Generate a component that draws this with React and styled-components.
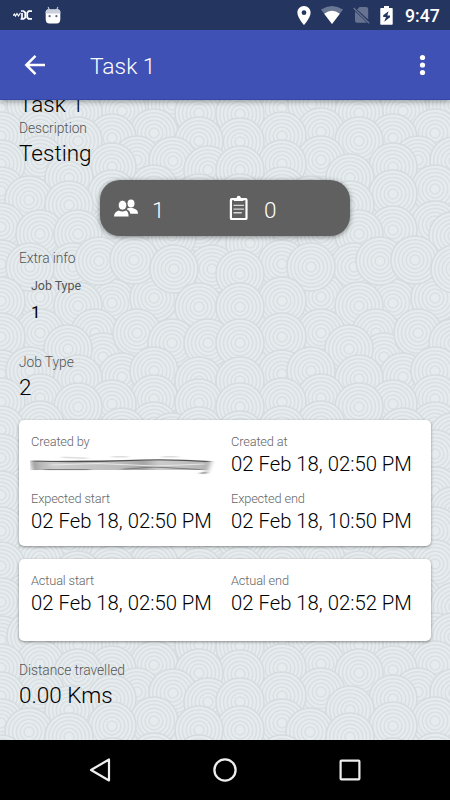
import React from "react";
import styled, { createGlobalStyle } from "styled-components";

const GlobalStyle = createGlobalStyle`
  * { box-sizing: border-box; }
  html, body { margin: 0; padding: 0; background: #000; }
  body { font-family: Roboto, "Noto Sans", sans-serif; }
`;

const Screen = styled.div`
  width: 450px;
  height: 800px;
  display: flex;
  flex-direction: column;
  overflow: hidden;
  background: #e4e9ec;
`;

const StatusBar = styled.header`
  height: 30px;
  flex: none;
  display: flex;
  align-items: center;
  padding: 0 10px 0 13px;
  background: #243660;
  color: #fff;
  z-index: 3;
`;

const StatusGroup = styled.div`
  display: flex;
  align-items: center;
  gap: ${(p) => p.$gap}px;
  margin-left: ${(p) => (p.$end ? "auto" : 0)};
`;

const Clock = styled.span`
  font-size: 17.7px;
  font-weight: 500;
  line-height: 30px;
  margin-left: 2px;
  width: 35px;
  white-space: nowrap;
  padding-top: 1px;
`;

const AppBar = styled.div`
  height: 70px;
  flex: none;
  display: flex;
  align-items: center;
  padding: 0 21px 0 24px;
  background: #3f51b5;
  border-bottom: 1px solid #3347ab;
  box-shadow: 0 2px 5px rgba(0, 0, 0, 0.32);
  z-index: 2;
`;

const Title = styled.h1`
  flex: 1;
  margin: 4px 0 0 44px;
  font-size: 22.8px;
  font-weight: 300;
  color: #fff;
`;

const Content = styled.main`
  position: relative;
  height: 640px;
  flex: none;
  overflow: hidden;
  isolation: isolate;
  padding: 0 19px;
`;

const Backdrop = styled.svg`
  position: absolute;
  inset: 0;
  z-index: -1;
`;

const Field = styled.section`
  display: flex;
  flex-direction: column;
  gap: 2px;
  margin-top: ${(p) => p.$top || 0}px;
  padding-left: ${(p) => p.$indent || 0}px;
`;

const Label = styled.div`
  font-size: 13.8px;
  font-weight: 300;
  letter-spacing: -0.06px;
  line-height: 18px;
  color: #555;
`;

const Value = styled.div`
  font-size: 22.5px;
  font-weight: 300;
  line-height: 28px;
  color: #000;
`;

const MinorLabel = styled(Label)`
  font-size: 12.5px;
  font-weight: 400;
`;

const MinorValue = styled(Value)`
  font-size: 17px;
  font-weight: 400;
  line-height: 24px;
  margin-top: 3px;
`;

const Counters = styled.div`
  width: 250px;
  height: 56px;
  margin: 13px auto 0;
  display: grid;
  grid-template-columns: 116px 1fr;
  align-items: center;
  padding-left: 13px;
  border-radius: 20px;
  background: #606060;
  box-shadow: 0 1px 5px rgba(0, 0, 0, 0.45);
`;

const Counter = styled.div`
  display: flex;
  align-items: center;
  gap: ${(p) => p.$gap}px;
  font-size: 22.5px;
  font-weight: 300;
  line-height: 28px;
  color: #fff;
`;

const Count = styled.span`
  padding-top: 3px;
`;

const Card = styled.section`
  display: grid;
  grid-template-columns: 200px 1fr;
  align-content: start;
  row-gap: 12px;
  width: 412px;
  height: ${(p) => p.$height}px;
  margin-top: ${(p) => p.$top}px;
  padding: 13px 0 0 12px;
  border-radius: 5px;
  background: #fff;
  box-shadow: 0 1px 3px rgba(0, 0, 0, 0.42);
`;

const Cell = styled.div`
  min-width: 0;
`;

const CellLabel = styled(Label)`
  font-size: 12.8px;
  letter-spacing: -0.15px;
  color: #666;
`;

const CellValue = styled(Value)`
  font-size: 20.3px;
  line-height: 27px;
  white-space: nowrap;
`;

const Smudge = styled.svg`
  display: block;
  width: 188px;
  height: 27px;
  margin-left: -1px;
`;

const NavBar = styled.nav`
  height: 60px;
  flex: none;
  display: flex;
  justify-content: space-between;
  align-items: center;
  padding: 0 88px 0 88px;
  background: #000;
  z-index: 2;
`;

const PERIOD_X = 281;
const PERIOD_Y = 532;
const RINGS = [20.3, 16.5, 12.7, 8.9, 5];

// Centres of the wave circles in one tile, listed from back to front.
const CIRCLES = [
  [282, 108], [312, 104], [435, 105], [453, 105], [480, 113], [403, 111], [359, 113], [240, 114],
  [435, 133], [321, 132], [282, 136], [393, 138], [359, 141], [240, 142], [480, 141],
  [418, 160], [454, 161], [321, 160], [282, 164], [393, 167], [489, 170], [240, 170], [350, 178],
  [435, 189], [282, 191], [393, 194], [240, 198], [480, 198], [310, 200], [350, 205],
  [435, 225], [480, 227], [282, 227], [393, 230], [321, 234], [359, 234], [453, 236], [250, 243],
  [393, 303], [435, 298], [354, 267], [282, 264], [321, 297], [311, 267], [380, 261], [415, 260],
  [493, 269], [455, 269], [240, 274],
  [282, 301], [359, 306], [480, 307], [240, 307],
  [376, 333], [384, 357], [321, 333], [282, 337], [418, 333], [453, 343], [489, 343], [240, 343], [349, 349],
  [403, 377], [435, 371], [282, 374], [311, 371], [359, 379], [480, 381], [240, 381],
  [435, 399], [321, 398], [282, 402], [393, 404], [480, 403], [359, 407], [240, 407],
  [435, 426], [321, 425], [282, 430], [403, 432], [453, 437], [480, 431], [349, 444], [240, 435],
  [435, 454], [321, 456], [282, 458], [393, 462], [480, 464], [359, 472], [240, 464],
  [435, 491], [311, 490], [282, 495], [393, 498], [453, 511], [480, 501], [359, 506], [240, 500],
  [435, 531], [321, 526], [282, 531], [403, 534], [489, 538], [350, 541], [240, 536],
  [435, 564], [321, 560], [282, 566], [393, 570], [480, 572], [359, 575], [240, 571],
  [418, 600], [311, 596], [282, 602], [454, 607], [489, 607], [350, 611], [240, 607],
];

function buildCircles() {
  const out = [];
  [-1, 0, 1].forEach((row) => {
    CIRCLES.forEach(([cx, cy]) => {
      [-2, -1, 0, 1].forEach((col) => {
        const x = cx + col * PERIOD_X;
        const y = cy - 100 + row * PERIOD_Y;
        if (x > -25 && x < 475 && y > -25 && y < 665) out.push([x, y]);
      });
    });
  });
  return out;
}

const WAVES = buildCircles();

function WaveBackdrop() {
  return (
    <Backdrop width="450" height="640" viewBox="0 0 450 640" aria-hidden="true">
      <defs>
        <g id="wave" fill="none" stroke="#d9dfe2" strokeWidth="1.5">
          <circle r="24" fill="#e6ecee" strokeWidth="1.6" stroke="#d5dbde" />
          {RINGS.map((r) => (
            <circle key={r} r={r} />
          ))}
        </g>
      </defs>
      {WAVES.map(([x, y], i) => (
        <use key={i} href="#wave" x={x} y={y} />
      ))}
    </Backdrop>
  );
}

function CarrierIcon() {
  return (
    <svg width="20" height="12" viewBox="0 0 20 12" fill="none" stroke="#fff">
      <path d="M0 6.5 L1.5 5 L2.5 7 L4 4.5 L5.5 7 L7.5 3.8" strokeWidth="1.1" />
      <path d="M8 2 H10.5 L12.2 3.5 V8.5 L10.5 10 H7.5 M9 4 V10" strokeWidth="1.7" />
      <path d="M19 2.2 H15.6 L14.2 3.8 V8.3 L15.6 9.8 H19" strokeWidth="1.8" />
    </svg>
  );
}

function RobotIcon() {
  return (
    <svg width="16" height="18" viewBox="0 0 16 18">
      <path d="M4.5 5 L3.2 1 M11.5 5 L12.8 1" stroke="#b7bfce" strokeWidth="1.2" />
      <path d="M2.5 3.5 H13.5 Q15.3 3.5 15.3 6 V13 Q15.3 17.5 11.5 17.5 H4.5 Q.7 17.5 .7 13 V6 Q.7 3.5 2.5 3.5Z" fill="#fff" />
      <path d="M2.5 3.5 H13.5 Q15.3 3.5 15.3 6 V7.5 H.7 V6 Q.7 3.5 2.5 3.5Z" fill="#c9cfdb" />
      <circle cx="4.6" cy="10.2" r="1.1" fill="#56617f" />
      <circle cx="11.4" cy="10.2" r="1.1" fill="#56617f" />
    </svg>
  );
}

function PinIcon() {
  return (
    <svg width="14" height="19" viewBox="0 0 14 19">
      <path fillRule="evenodd" fill="#fff" d="M7 0C3.1 0 .4 3 .4 6.7 .4 11.5 7 19 7 19s6.6-7.5 6.6-12.3C13.6 3 10.9 0 7 0Zm0 4.3a2.4 2.4 0 1 1 0 4.8 2.4 2.4 0 0 1 0-4.8Z" />
    </svg>
  );
}

function WifiIcon() {
  return (
    <svg width="22" height="18" viewBox="0 0 22 18">
      <path d="M0 3.6 Q11-3.6 22 3.6 L11 18Z" fill="#6b7894" />
      <path d="M3.2 7.7 Q11 1.8 18.8 7.7 L11 18Z" fill="#fff" />
    </svg>
  );
}

function NoSimIcon() {
  return (
    <svg width="17" height="18" viewBox="0 0 17 18">
      <path d="M6.6 1 H13 Q15.2 1 15.2 3 V13.4 L4.1 3.4Z M2 5.2 L14 16.8 H4 Q2 16.8 2 15Z" fill="#66728f" />
      <path d="M.6 2 L16.2 17.2" stroke="#66728f" strokeWidth="1.3" />
    </svg>
  );
}

function BatteryIcon() {
  return (
    <svg width="13" height="19" viewBox="0 0 13 19">
      <path d="M4 0H9V2H12Q12.7 2 12.7 2.8V18Q12.7 18.8 12 18.8H1Q.3 18.8 .3 18V2.8Q.3 2 1 2H4Z" fill="#fff" />
      <path d="M8.6 5.2 L3.2 9.3 V11 H6 L4.2 15.8 L10 11.3 V9.5 H7.3Z" fill="#243660" />
    </svg>
  );
}

function BackIcon() {
  return (
    <svg width="22" height="22" viewBox="0 0 22 22" fill="none" stroke="#fff" strokeWidth="2.5">
      <path d="M21 11 H3 M11.5 1.8 L2.3 11 L11.5 20.2" />
    </svg>
  );
}

function MoreIcon() {
  return (
    <svg width="13" height="22" viewBox="0 0 13 22" fill="#fff">
      <circle cx="6.5" cy="3.5" r="2.6" />
      <circle cx="6.5" cy="11" r="2.6" />
      <circle cx="6.5" cy="18.5" r="2.6" />
    </svg>
  );
}

function PeopleIcon() {
  return (
    <svg width="26" height="20" viewBox="0 0 26 20" fill="#fff">
      <ellipse cx="18" cy="5.4" rx="3.5" ry="4" />
      <path d="M14.5 10.2 Q18 8.8 22 11 Q25 12 25 15.7 H17.4 Q17 12.6 13.9 11.3Z" />
      <ellipse cx="9.5" cy="7.2" rx="4.2" ry="4.9" stroke="#606060" strokeWidth=".8" />
      <path d="M1 18.6 Q1 13.9 5.8 12.5 Q9.3 14.5 13 12.5 Q15.6 13.4 15.6 18.6Z" />
    </svg>
  );
}

function ClipboardIcon() {
  return (
    <svg width="20" height="26" viewBox="0 0 20 26">
      <rect x="1.9" y="4.2" width="15.6" height="19.8" rx=".8" fill="none" stroke="#fff" strokeWidth="2.2" />
      <path d="M5 3 H7.5 Q8 .8 9.7 .8 Q11.4 .8 12 3 H14.4 V6 H5Z" fill="#fff" />
      <path d="M4.5 10.4H15 M4.5 14.1H15 M4.5 17.8H12.8" stroke="#d9d9d9" strokeWidth="1.4" />
    </svg>
  );
}

function RedactedName() {
  return (
    <Smudge viewBox="0 0 188 27" aria-hidden="true">
      <defs>
        <filter id="smear" x="-5%" y="-20%" width="110%" height="140%">
          <feGaussianBlur stdDeviation="2.4 0.7" />
        </filter>
        <linearGradient id="ink" x1="0" x2="1">
          <stop offset="0" stopColor="#aaa" />
          <stop offset=".12" stopColor="#ccc" />
          <stop offset=".5" stopColor="#bbb" />
          <stop offset=".63" stopColor="#a4a4a4" />
          <stop offset=".72" stopColor="#ccc" />
          <stop offset="1" stopColor="#b4b4b4" />
        </linearGradient>
      </defs>
      <g filter="url(#smear)" fill="none">
        <path d="M2 10 L50 9 L179 10 L176 19 L3 19Z" fill="url(#ink)" />
        <path d="M2 10 Q50 11.4 95 9.6 T180 10.6" stroke="#505050" strokeWidth="1.2" />
        <path d="M2.5 10 L4.5 19" stroke="#555" strokeWidth="2" />
        <path d="M14 18.6H60 M92 18.3L124 16L172 18.6" stroke="#777" strokeWidth="1" />
        <path d="M20 14L68 12.5L126 15L174 13" stroke="#e6e6e6" strokeWidth="1.2" />
        <path d="M180 10L176 21.5L171 22.5" stroke="#777" strokeWidth="1.6" />
        <path d="M32 6.2L57 7.2 M82 5.7H98 M132 5.8H148" stroke="#ddd" strokeWidth="1.5" />
      </g>
    </Smudge>
  );
}

function DateCell({ label, value }) {
  return (
    <Cell>
      <CellLabel>{label}</CellLabel>
      {value ? <CellValue>{value}</CellValue> : <RedactedName />}
    </Cell>
  );
}

export default function App() {
  return (
    <>
      <GlobalStyle />
      <Screen>
        <StatusBar>
          <StatusGroup $gap={12}>
            <CarrierIcon />
            <RobotIcon />
          </StatusGroup>
          <StatusGroup $gap={10} $end>
            <PinIcon />
            <WifiIcon />
            <NoSimIcon />
            <BatteryIcon />
            <Clock>9:47</Clock>
          </StatusGroup>
        </StatusBar>
        <AppBar>
          <BackIcon />
          <Title>Task 1</Title>
          <MoreIcon />
        </AppBar>
        <Content>
          <WaveBackdrop />
          <Field $top={-10}>
            <Value>Task 1</Value>
          </Field>
          <Field $top={1}>
            <Label>Description</Label>
            <Value>Testing</Value>
          </Field>
          <Counters>
            <Counter $gap={13}>
              <PeopleIcon />
              <Count>1</Count>
            </Counter>
            <Counter $gap={15}>
              <ClipboardIcon />
              <Count>0</Count>
            </Counter>
          </Counters>
          <Field $top={13}>
            <Label>Extra info</Label>
          </Field>
          <Field $top={10} $indent={12}>
            <MinorLabel>Job Type</MinorLabel>
            <MinorValue>1</MinorValue>
          </Field>
          <Field $top={29}>
            <Label>Job Type</Label>
            <Value>2</Value>
          </Field>
          <Card $height={126} $top={19}>
            <DateCell label="Created by" />
            <DateCell label="Created at" value="02 Feb 18, 02:50 PM" />
            <DateCell label="Expected start" value="02 Feb 18, 02:50 PM" />
            <DateCell label="Expected end" value="02 Feb 18, 10:50 PM" />
          </Card>
          <Card $height={82} $top={13}>
            <DateCell label="Actual start" value="02 Feb 18, 02:50 PM" />
            <DateCell label="Actual end" value="02 Feb 18, 02:52 PM" />
          </Card>
          <Field $top={20}>
            <Label>Distance travelled</Label>
            <Value>0.00 Kms</Value>
          </Field>
        </Content>
        <NavBar>
          <svg width="24" height="26" viewBox="0 0 24 26" fill="none" stroke="#eee" strokeWidth="2.2" strokeLinejoin="round">
            <path d="M21 2.5 V23.5 L3 13Z" />
          </svg>
          <svg width="26" height="26" viewBox="0 0 26 26" fill="none" stroke="#eee" strokeWidth="2.3">
            <circle cx="13" cy="13" r="10.6" />
          </svg>
          <svg width="24" height="24" viewBox="0 0 24 24" fill="none" stroke="#eee" strokeWidth="2.2">
            <rect x="2.6" y="2.6" width="18.8" height="18.8" rx=".8" />
          </svg>
        </NavBar>
      </Screen>
    </>
  );
}
